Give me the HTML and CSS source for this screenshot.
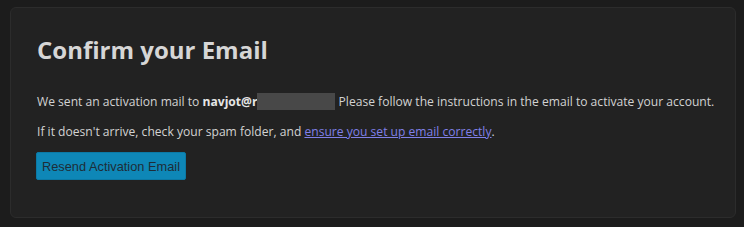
FILE: index.html
```html
<!DOCTYPE html>
<html>
<head>
<meta charset="utf-8">
<link rel="stylesheet" href="styles.css">
</head>
<body>
<div class="card">
  <h1 class="title">Confirm your Email</h1>
  <p class="line">We sent an activation mail to <b>navjot@r</b><span class="redact"></span> Please follow the instructions in the email to activate your account.</p>
  <p class="line">If it doesn't arrive, check your spam folder, and <a class="link" href="#">ensure you set up email correctly</a>.</p>
  <button class="btn">Resend Activation Email</button>
</div>
</body>
</html>
```
FILE: styles.css
```css
html, body {
  margin: 0;
  background: #1c1c1c;
}
body {
  padding: 7px 8px 8px 10px;
  font-family: "Open Sans", "Noto Sans", sans-serif;
  color: #d2d2d2;
}
.card {
  background: #222222;
  border: 1px solid #2c2c2c;
  border-radius: 6px;
  padding: 26px 26px 37px 25px;
}
.title {
  margin: 0 0 27px 1px;
  font-size: 24px;
  font-weight: 700;
  line-height: 32px;
  color: #d6d6d6;
}
.line {
  margin: 0 0 12px 1px;
  font-size: 12.1px;
  line-height: 18px;
  white-space: nowrap;
}
.line b {
  font-weight: 700;
  color: #e6e6e6;
}
.redact {
  display: inline-block;
  width: 78px;
  height: 17px;
  background: #484848;
  vertical-align: -4px;
}
.link {
  color: #8080e8;
  text-decoration: underline;
}
.btn {
  display: block;
  margin-top: -1px;
  font-family: "Liberation Sans", Arial, sans-serif;
  font-size: 12.8px;
  white-space: nowrap;
  color: #1e2d38;
  background: #0e87b7;
  border: 1px solid #0b79a5;
  border-radius: 2px;
  padding: 0 5px;
  height: 28px;
}
```
